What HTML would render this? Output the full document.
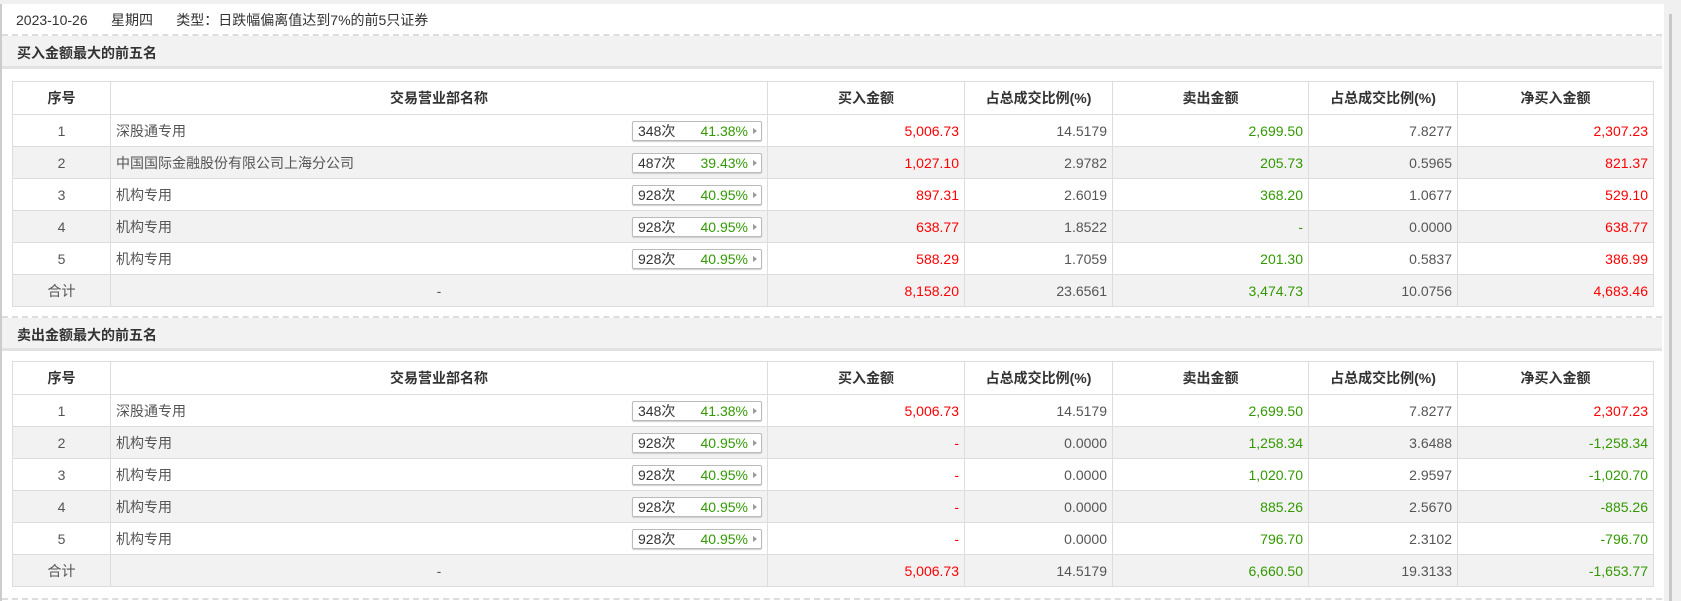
<!DOCTYPE html>
<html><head><meta charset="utf-8"><style>
*{margin:0;padding:0;box-sizing:border-box}
body{width:1681px;height:601px;overflow:hidden;background:#fff;font-family:"Liberation Sans","Noto Sans CJK SC",sans-serif;font-size:14px;color:#555;position:relative}
.top{position:absolute;left:0;top:0;width:1664px;height:4px;background:#f0f0f0}
.lb{position:absolute;left:0;top:4px;width:2px;height:597px;background:#ccc}
.sb{position:absolute;left:1664px;top:0;width:17px;height:601px;background:#f0f0f0}
.sb2{position:absolute;left:1669px;top:14px;width:3px;height:587px;background:#c8c8c8}
.info{position:absolute;left:16px;top:10px;color:#333;font-size:14px;white-space:pre}
.dash{position:absolute;left:2px;width:1660px;border-top:2px dashed #ddd}
.band{position:absolute;left:2px;width:1660px;height:33px;background:#f2f2f2;border-bottom:3px solid #e2e2e2;font-weight:bold;color:#333;padding:7px 0 0 15px}
table{position:absolute;left:12px;width:1641px;border-collapse:collapse;table-layout:fixed}
td,th{border:1px solid #ddd;height:32px;padding:0 5px;white-space:nowrap}
th{height:33px;color:#333;font-weight:bold;text-align:center}
tr:nth-child(odd) td{background:#f2f2f2}
.c{text-align:center}.r{text-align:right}
.red{color:#f00}.grn{color:#339900}
.nm{position:relative}
.btn{position:absolute;right:5px;top:6px;width:130px;height:20px;border:1px solid #bbb;border-radius:2px;background:#fff;box-shadow:0 1px 1px #ccc;font-size:14px;line-height:18px}
.btn .a{position:absolute;left:5px;color:#333}
.btn .b{position:absolute;right:13px;color:#339900}
.btn .t{position:absolute;right:4px;top:6px;border-left:4px solid #999;border-top:3px solid transparent;border-bottom:3px solid transparent}
</style></head><body>
<div class="top"></div><div class="lb"></div><div class="sb"></div><div class="sb2"></div>
<div class="info">2023-10-26      星期四      类型：日跌幅偏离值达到7%的前5只证券</div>
<div class="dash" style="top:34px"></div>
<div class="band" style="top:36px">买入金额最大的前五名</div>
<table style="top:81px">
<colgroup><col style="width:98px"><col style="width:657px"><col style="width:197px"><col style="width:148px"><col style="width:196px"><col style="width:149px"><col style="width:196px"></colgroup>
<tr><th>序号</th><th>交易营业部名称</th><th>买入金额</th><th>占总成交比例(%)</th><th>卖出金额</th><th>占总成交比例(%)</th><th>净买入金额</th></tr>
<tr><td class="c">1</td><td class="nm">深股通专用<span class="btn"><span class="a">348次</span><span class="b">41.38%</span><span class="t"></span></span></td><td class="r red">5,006.73</td><td class="r">14.5179</td><td class="r grn">2,699.50</td><td class="r">7.8277</td><td class="r red">2,307.23</td></tr>
<tr><td class="c">2</td><td class="nm">中国国际金融股份有限公司上海分公司<span class="btn"><span class="a">487次</span><span class="b">39.43%</span><span class="t"></span></span></td><td class="r red">1,027.10</td><td class="r">2.9782</td><td class="r grn">205.73</td><td class="r">0.5965</td><td class="r red">821.37</td></tr>
<tr><td class="c">3</td><td class="nm">机构专用<span class="btn"><span class="a">928次</span><span class="b">40.95%</span><span class="t"></span></span></td><td class="r red">897.31</td><td class="r">2.6019</td><td class="r grn">368.20</td><td class="r">1.0677</td><td class="r red">529.10</td></tr>
<tr><td class="c">4</td><td class="nm">机构专用<span class="btn"><span class="a">928次</span><span class="b">40.95%</span><span class="t"></span></span></td><td class="r red">638.77</td><td class="r">1.8522</td><td class="r grn">-</td><td class="r">0.0000</td><td class="r red">638.77</td></tr>
<tr><td class="c">5</td><td class="nm">机构专用<span class="btn"><span class="a">928次</span><span class="b">40.95%</span><span class="t"></span></span></td><td class="r red">588.29</td><td class="r">1.7059</td><td class="r grn">201.30</td><td class="r">0.5837</td><td class="r red">386.99</td></tr>
<tr><td class="c">合计</td><td class="c">-</td><td class="r red">8,158.20</td><td class="r">23.6561</td><td class="r grn">3,474.73</td><td class="r">10.0756</td><td class="r red">4,683.46</td></tr>
</table>
<div class="dash" style="top:316px"></div>
<div class="band" style="top:318px">卖出金额最大的前五名</div>
<table style="top:361px">
<colgroup><col style="width:98px"><col style="width:657px"><col style="width:197px"><col style="width:148px"><col style="width:196px"><col style="width:149px"><col style="width:196px"></colgroup>
<tr><th>序号</th><th>交易营业部名称</th><th>买入金额</th><th>占总成交比例(%)</th><th>卖出金额</th><th>占总成交比例(%)</th><th>净买入金额</th></tr>
<tr><td class="c">1</td><td class="nm">深股通专用<span class="btn"><span class="a">348次</span><span class="b">41.38%</span><span class="t"></span></span></td><td class="r red">5,006.73</td><td class="r">14.5179</td><td class="r grn">2,699.50</td><td class="r">7.8277</td><td class="r red">2,307.23</td></tr>
<tr><td class="c">2</td><td class="nm">机构专用<span class="btn"><span class="a">928次</span><span class="b">40.95%</span><span class="t"></span></span></td><td class="r red">-</td><td class="r">0.0000</td><td class="r grn">1,258.34</td><td class="r">3.6488</td><td class="r grn">-1,258.34</td></tr>
<tr><td class="c">3</td><td class="nm">机构专用<span class="btn"><span class="a">928次</span><span class="b">40.95%</span><span class="t"></span></span></td><td class="r red">-</td><td class="r">0.0000</td><td class="r grn">1,020.70</td><td class="r">2.9597</td><td class="r grn">-1,020.70</td></tr>
<tr><td class="c">4</td><td class="nm">机构专用<span class="btn"><span class="a">928次</span><span class="b">40.95%</span><span class="t"></span></span></td><td class="r red">-</td><td class="r">0.0000</td><td class="r grn">885.26</td><td class="r">2.5670</td><td class="r grn">-885.26</td></tr>
<tr><td class="c">5</td><td class="nm">机构专用<span class="btn"><span class="a">928次</span><span class="b">40.95%</span><span class="t"></span></span></td><td class="r red">-</td><td class="r">0.0000</td><td class="r grn">796.70</td><td class="r">2.3102</td><td class="r grn">-796.70</td></tr>
<tr><td class="c">合计</td><td class="c">-</td><td class="r red">5,006.73</td><td class="r">14.5179</td><td class="r grn">6,660.50</td><td class="r">19.3133</td><td class="r grn">-1,653.77</td></tr>
</table>
<div class="dash" style="top:598px"></div>
</body></html>
